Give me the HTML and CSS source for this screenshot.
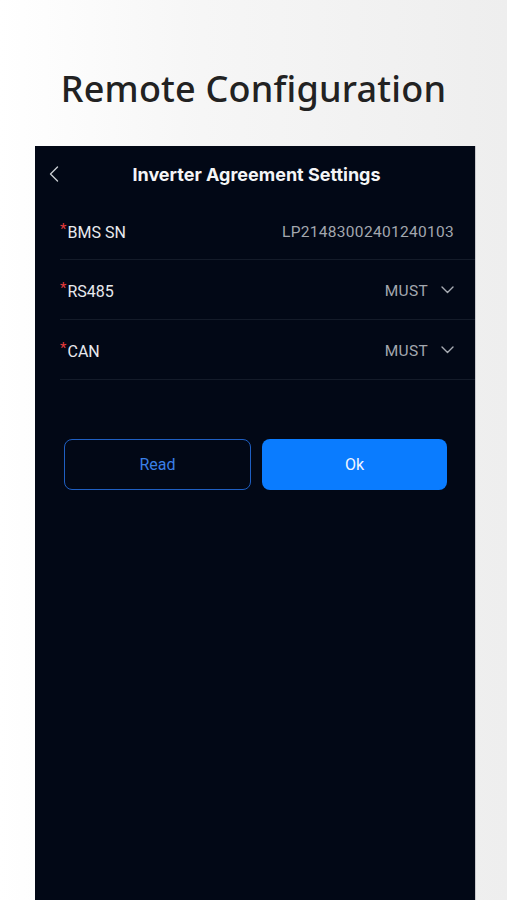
FILE: index.html
```html
<!DOCTYPE html>
<html>
<head>
  <meta charset="utf-8">
  <meta name="viewport" content="width=device-width, initial-scale=1">
  <title>Remote Configuration</title>
  <link rel="stylesheet" href="styles.css">
</head>
<body>

<h1 class="page-title">Remote Configuration</h1>

<div class="screen">

  <div class="nav-bar">
    <span class="back">
      <svg width="10" height="16" viewBox="0 0 10 16"><path d="M8.5 1 L1.5 8 L8.5 15" fill="none" stroke="#c9ccd2" stroke-width="1.4" stroke-linecap="round" stroke-linejoin="round"/></svg>
    </span>
    <span class="nav-title">Inverter Agreement Settings</span>
  </div>

  <div class="form-list">
    <div class="form-row">
      <span class="label"><span class="req">*</span>BMS SN</span>
      <span class="value">LP21483002401240103</span>
    </div>
    <div class="form-row">
      <span class="label"><span class="req">*</span>RS485</span>
      <span class="value">MUST
        <svg class="caret" width="13" height="8" viewBox="0 0 13 8"><path d="M1 1 L6.5 6.5 L12 1" fill="none" stroke="#a9adb5" stroke-width="1.4" stroke-linecap="round" stroke-linejoin="round"/></svg>
      </span>
    </div>
    <div class="form-row">
      <span class="label"><span class="req">*</span>CAN</span>
      <span class="value">MUST
        <svg class="caret" width="13" height="8" viewBox="0 0 13 8"><path d="M1 1 L6.5 6.5 L12 1" fill="none" stroke="#a9adb5" stroke-width="1.4" stroke-linecap="round" stroke-linejoin="round"/></svg>
      </span>
    </div>
  </div>

  <div class="actions">
    <button type="button" class="btn btn-outline">Read</button>
    <button type="button" class="btn btn-primary">Ok</button>
  </div>

</div>

</body>
</html>
```

FILE: styles.css
```css
html, body {
  margin: 0;
  height: 100%;
}

body {
  background: linear-gradient(90deg, #ffffff 0%, #f6f6f6 40%, #eeeeee 100%);
  font-family: Roboto, "Noto Sans", sans-serif;
  overflow: hidden;
}

.page-title {
  margin: 0;
  padding-top: 64px;
  height: 82px;
  text-align: center;
  font-family: "Noto Sans", sans-serif;
  font-weight: 500;
  font-size: 36px;
  line-height: 50px;
  color: #222222;
  letter-spacing: 0.2px;
}

.screen {
  margin-left: 35px;
  width: 441px;
  height: 760px;
  background: #020816;
  border-right: 1px solid #c9c9cc;
  box-sizing: border-box;
}

.nav-bar {
  position: relative;
  height: 56px;
  display: flex;
  align-items: center;
  justify-content: center;
}

.back {
  position: absolute;
  left: 14px;
  top: 20px;
}

.nav-title {
  color: #f4f5f7;
  font-family: Inter, sans-serif;
  font-weight: 700;
  font-size: 18px;
  margin-top: 1px;
  margin-left: 3px;
}

.form-list {
  margin-left: 25px;
}

.form-row {
  height: 59px;
  border-bottom: 1px solid #141b29;
  display: flex;
  align-items: center;
  justify-content: space-between;
  padding-right: 21px;
}

.form-row:first-child {
  height: 57px;
}

.label {
  color: #e8eaee;
  font-size: 16px;
  padding-top: 4px;
}

.req {
  color: #e23b3b;
  font-size: 15px;
  position: relative;
  top: -4px;
  margin-right: 1px;
}

.value {
  color: #a3a7af;
  font-size: 15.5px;
  display: flex;
  align-items: center;
  padding-top: 3px;
  letter-spacing: 0.3px;
}

.caret {
  margin-left: 13px;
  margin-top: -3px;
}

.actions {
  display: flex;
  gap: 11px;
  padding: 59px 28px 0 29px;
}

.btn {
  flex: 1;
  height: 51px;
  border-radius: 8px;
  font-family: Roboto, sans-serif;
  font-size: 16px;
  cursor: pointer;
}

.btn-outline {
  background: transparent;
  border: 1.5px solid #1f5fc2;
  color: #3a7fe6;
}

.btn-primary {
  background: #0a7cff;
  border: none;
  color: #f2f6ff;
}
```
